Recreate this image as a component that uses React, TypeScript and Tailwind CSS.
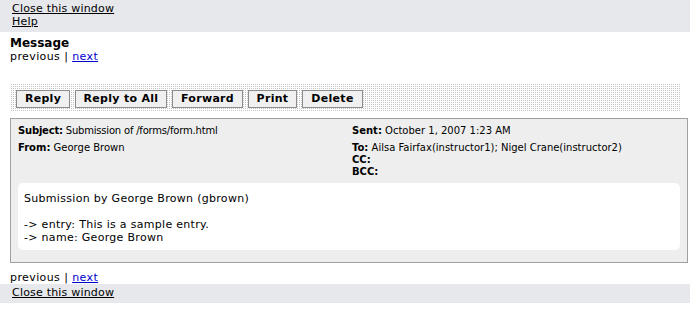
import React from 'react';

const buttons = [
  { label: 'Reply', w: 'w-[54px]' },
  { label: 'Reply to All', w: 'w-[92px]' },
  { label: 'Forward', w: 'w-[71px]' },
  { label: 'Print', w: 'w-[49px]' },
  { label: 'Delete', w: 'w-[61px]' },
];

const PrevNext = () => (
  <div className="text-[11px] leading-[13px] tracking-[0.4px]">
    previous | <a href="#" className="text-[#0000cc] underline">next</a>
  </div>
);

const App: React.FC = () => {
  return (
    <div className="w-[690px] h-[312px] bg-white text-black font-['DejaVu_Sans',Verdana,sans-serif] overflow-hidden">
      <div className="bg-[#e6e8ec] h-[32px] pl-[12px] pt-[2px] text-[11px] leading-[13px] tracking-[0.2px]">
        <div><a href="#" className="underline">Close this window</a></div>
        <div><a href="#" className="underline">Help</a></div>
      </div>

      <div className="px-[10px] pt-[4px]">
        <div className="text-[12px] leading-[14px] font-bold">Message</div>
        <PrevNext />

        <div className="mt-[21px] w-[671px] h-[28px] flex items-start gap-[5px] px-[6px] pt-[6px] bg-[conic-gradient(#c4c4c4_25%,#fff_0)] bg-[length:2px_2px]">
          {buttons.map((b) => (
            <button
              key={b.label}
              className={`${b.w} h-[18px] bg-[#f0f0f0] border border-[#8c8c8c] text-[11px] leading-[14px] font-bold tracking-[0.3px] text-center`}
            >
              {b.label}
            </button>
          ))}
        </div>

        <div className="mt-[6px] w-[678px] border border-[#a0a0a0] bg-[#eeeeee] px-[7px] pt-[6px] pb-[12px]">
          <div className="grid grid-cols-[334px_1fr] text-[10px] leading-[12px]">
            <div>
              <div className="h-[17px] tracking-[-0.2px]"><b>Subject:</b> Submission of /forms/form.html</div>
              <div><b>From:</b> George Brown</div>
            </div>
            <div>
              <div className="h-[17px]"><b>Sent:</b> October 1, 2007 1:23 AM</div>
              <div><b>To:</b> Ailsa Fairfax(instructor1); Nigel Crane(instructor2)</div>
              <div><b>CC:</b></div>
              <div><b>BCC:</b></div>
            </div>
          </div>
          <div className="mt-[5px] bg-white rounded-[5px] px-[6px] pt-[9px] pb-[6px] text-[11px] leading-[13px] tracking-[0.3px]">
            <div>Submission by George Brown (gbrown)</div>
            <div className="h-[13px]"></div>
            <div>-&gt; entry: This is a sample entry.</div>
            <div>-&gt; name: George Brown</div>
          </div>
        </div>

        <div className="mt-[8px]">
          <PrevNext />
        </div>
      </div>

      <div className="bg-[#e6e8ec] h-[19px] pl-[12px] pt-[2px] text-[11px] leading-[13px] tracking-[0.2px]">
        <a href="#" className="underline">Close this window</a>
      </div>
    </div>
  );
};

export default App;
